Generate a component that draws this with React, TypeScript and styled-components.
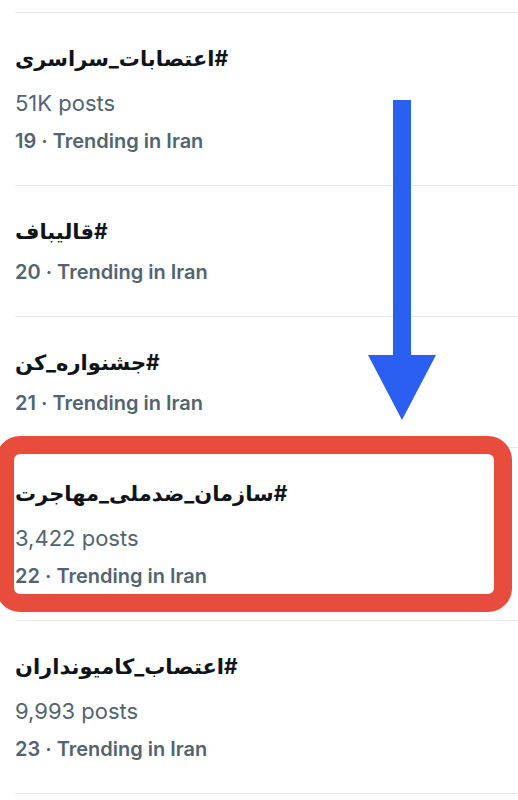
import React from 'react';
import styled, { createGlobalStyle } from 'styled-components';

const GlobalStyle = createGlobalStyle`
  html, body {
    margin: 0;
    padding: 0;
    background: #ffffff;
    overflow: hidden;
  }
  body {
    font-family: Inter, "DejaVu Sans", sans-serif;
  }
`;

const Page = styled.div`
  position: relative;
  width: 518px;
  height: 800px;
  padding-top: 12px;
  box-sizing: border-box;
  background: #fff;
`;

const List = styled.ul`
  list-style: none;
  margin: 0;
  padding: 0;
`;

const Item = styled.li<{ $last?: boolean }>`
  position: relative;
  margin-left: 15px;
  padding: 31px 0 25px;
  border-top: 1px solid #e4e7e9;
  border-bottom: ${(p) => (p.$last ? '1px solid #e4e7e9' : 'none')};
  display: flex;
  flex-direction: column;
  align-items: flex-start;
`;

const Title = styled.div`
  direction: rtl;
  text-align: left;
  font-family: Inter, "DejaVu Sans", sans-serif;
  font-weight: 700;
  font-size: 21px;
  line-height: 30px;
  color: #0f1419;
  margin-bottom: 6px;
`;

const Posts = styled.div`
  font-size: 22px;
  line-height: 38px;
  font-weight: 400;
  color: #536471;
  margin-top: 4px;
`;

const Meta = styled.div`
  font-size: 20px;
  line-height: 38px;
  font-weight: 600;
  color: #536471;
`;

const Highlight = styled.div`
  position: absolute;
  top: -12px;
  left: -19px;
  right: 6px;
  bottom: 8px;
  border: 18px solid #e84c3d;
  border-radius: 24px;
  box-sizing: border-box;
  pointer-events: none;
`;

const Arrow = styled.svg`
  position: absolute;
  left: 368px;
  top: 100px;
  width: 68px;
  height: 320px;
`;

type Trend = {
  rank: number;
  tag: string;
  posts?: string;
  marked?: boolean;
};

const trends: Trend[] = [
  { rank: 19, tag: '#اعتصابات_سراسری', posts: '51K posts' },
  { rank: 20, tag: '#قالیباف' },
  { rank: 21, tag: '#جشنواره_کن' },
  { rank: 22, tag: '#سازمان_ضدملی_مهاجرت', posts: '3,422 posts', marked: true },
  { rank: 23, tag: '#اعتصاب_کامیونداران', posts: '9,993 posts' },
];

function App(): JSX.Element {
  return (
    <Page>
      <GlobalStyle />
      <List>
        {trends.map((t, i) => (
          <Item key={t.rank} $last={i === trends.length - 1}>
            <Title>{t.tag}</Title>
            {t.posts && <Posts>{t.posts}</Posts>}
            <Meta>{t.rank} · Trending in Iran</Meta>
            {t.marked && <Highlight />}
          </Item>
        ))}
      </List>
      <Arrow viewBox="0 0 68 320">
        <rect x="25" y="0" width="18" height="256" fill="#2b5ff1" />
        <polygon points="0,255 68,255 34,320" fill="#2b5ff1" />
      </Arrow>
    </Page>
  );
}

export default App;
